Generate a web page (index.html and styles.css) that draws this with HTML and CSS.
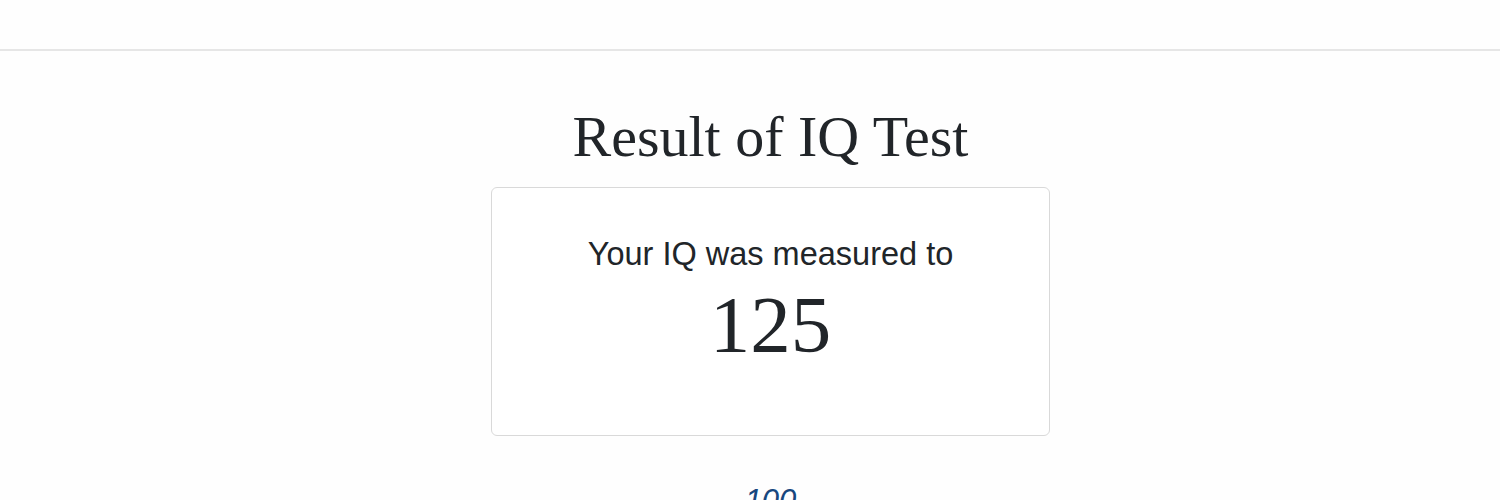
FILE: index.html
```html
<!DOCTYPE html>
<html lang="en">
<head>
<meta charset="utf-8">
<title>Result of IQ Test</title>
<link rel="stylesheet" href="styles.css">
</head>
<body>
  <header class="topbar"></header>
  <main class="result">
    <h1 class="result-title">Result of IQ Test</h1>
    <section class="score-card">
      <p class="score-label">Your IQ was measured to</p>
      <p class="score-value">125</p>
    </section>
    <div class="scale">
      <span class="scale-mark">100</span>
    </div>
  </main>
</body>
</html>
```

FILE: styles.css
```css
html, body {
  margin: 0;
  padding: 0;
  background: #fefefe;
  color: #212529;
}

.topbar {
  height: 49px;
  border-bottom: 2px solid #e6e6e6;
}

.result {
  display: flex;
  flex-direction: column;
  align-items: center;
  padding-left: 41px;
}

.result-title {
  margin: 51px 0 15px;
  font-family: "Liberation Serif", "Times New Roman", serif;
  font-weight: 400;
  font-size: 58px;
  line-height: 1.2;
}

.score-card {
  box-sizing: border-box;
  width: 559px;
  height: 249px;
  border: 1.5px solid #d9d9d9;
  border-radius: 6px;
  padding-top: 47px;
  display: flex;
  flex-direction: column;
  align-items: center;
  background: #fff;
}

.score-label {
  margin: 0;
  font-family: "Liberation Sans", Arial, sans-serif;
  font-size: 32.5px;
  line-height: 1.2;
}

.score-value {
  margin: 3px 0 0;
  font-family: "Liberation Serif", "Times New Roman", serif;
  font-size: 81px;
  line-height: 1.2;
}

.scale {
  margin-top: 46px;
}

.scale-mark {
  font-family: "Liberation Sans", Arial, sans-serif;
  font-style: italic;
  font-size: 31px;
  line-height: 1.2;
  color: #17477e;
}
```
